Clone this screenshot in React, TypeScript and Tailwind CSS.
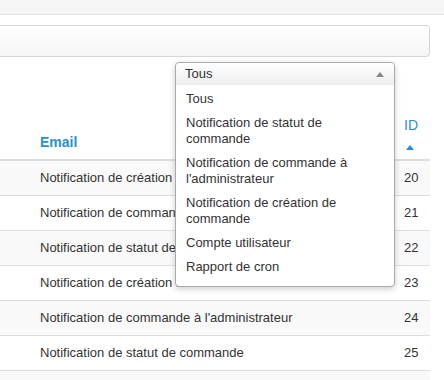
import React from 'react';

const rows = [
  { email: 'Notification de création de commande', id: 20 },
  { email: 'Notification de commande à l\'administrateur', id: 21 },
  { email: 'Notification de statut de commande', id: 22 },
  { email: 'Notification de création de commande', id: 23 },
  { email: 'Notification de commande à l\'administrateur', id: 24 },
  { email: 'Notification de statut de commande', id: 25 },
];

const options = [
  ['Tous'],
  ['Notification de statut de', 'commande'],
  ['Notification de commande à', 'l\'administrateur'],
  ['Notification de création de', 'commande'],
  ['Compte utilisateur'],
  ['Rapport de cron'],
];

export default function App() {
  return (
    <div className="relative w-[444px] h-[380px] overflow-hidden bg-white text-[13px] text-[#333] font-['Liberation_Sans',Arial,sans-serif]">
      <div className="h-[15px] bg-[#f5f5f5] border-b border-[#e3e3e3]" />

      <div className="pt-[10px] pr-[14px]">
        <div className="-ml-2 h-[32px] rounded-r-[4px] border border-[#d5d5d5] bg-gradient-to-b from-white to-[#f5f5f5]" />
      </div>

      <div className="pt-[60px] pr-[14px]">
        <div className="flex h-[44px] items-end border-b-2 border-[#ddd] pb-[6px]">
          <div className="flex-1 pl-[40px] text-[14px] font-bold text-[#2a8fd0]">Email</div>
          <div className="w-[26px] flex flex-col items-start text-[14px] text-[#2a8fd0]">
            <span className="leading-[16px]">ID</span>
            <svg width="8" height="5" viewBox="0 0 8 5" className="mt-[12px] mb-[3px] ml-[2px]">
              <path d="M0 5 L4 0 L8 5 Z" fill="#2a8fd0" />
            </svg>
          </div>
        </div>
        {rows.map((r, i) => (
          <div
            key={r.id}
            className={`flex h-[35px] items-center border-b border-[#ddd] ${i % 2 === 0 ? 'bg-[#f9f9f9]' : 'bg-white'}`}
          >
            <div className="flex-1 pl-[40px]">{r.email}</div>
            <div className="w-[26px]">{r.id}</div>
          </div>
        ))}
        <div className="h-[35px] bg-[#f9f9f9]" />
      </div>

      <div className="absolute left-[175px] top-[62px] w-[220px] rounded-[4px] border border-[#aaa] bg-white shadow-[0_2px_6px_rgba(0,0,0,0.2)]">
        <div className="flex h-[22px] items-center justify-between rounded-t-[4px] bg-gradient-to-b from-white to-[#eee] pl-[9px] pr-[10px]">
          <span>Tous</span>
          <svg width="8" height="5" viewBox="0 0 8 5">
            <path d="M0 5 L4 0 L8 5 Z" fill="#888" />
          </svg>
        </div>
        <div className="pt-[2px] pb-[7px]">
          {options.map((o, i) => (
            <div key={i} className="px-[10px] py-[4px] leading-[16px]">
              {o.map((l, j) => (
                <div key={j}>{l}</div>
              ))}
            </div>
          ))}
        </div>
      </div>
    </div>
  );
}
